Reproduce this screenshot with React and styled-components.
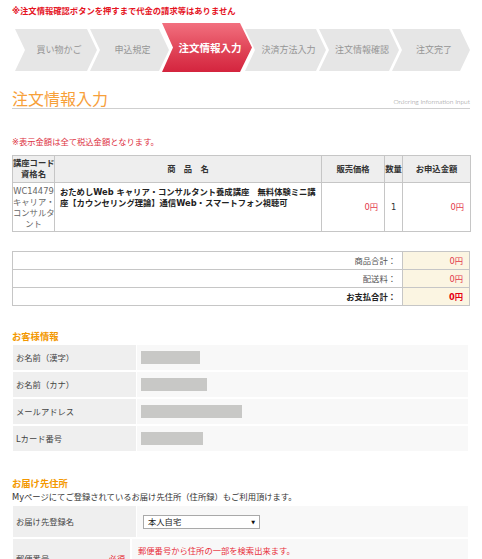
import React from "react";
import styled, { createGlobalStyle } from "styled-components";

const GlobalStyle = createGlobalStyle`
  html, body {
    margin: 0;
    padding: 0;
    background: #fff;
  }
  body {
    font-family: "DejaVu Sans", "Noto Sans CJK JP", sans-serif;
    font-size: 8.3px;
    line-height: 12px;
    color: #333;
  }
`;

const steps = [
  { label: "買い物かご", w: 82 },
  { label: "申込規定", w: 79 },
  { label: "注文情報入力", w: 90, active: true },
  { label: "決済方法入力", w: 81 },
  { label: "注文情報確認", w: 80 },
  { label: "注文完了", w: 78 },
];

const customer = [
  { label: "お名前（漢字）", bar: 59 },
  { label: "お名前（カナ）", bar: 66 },
  { label: "メールアドレス", bar: 101 },
  { label: "Lカード番号", bar: 62 },
];

const codeLines = ["WC14479", "キャリア・", "コンサルタ", "ント"];
const nameLines = [
  "おためしWeb キャリア・コンサルタント養成講座　無料体験ミニ講",
  "座【カウンセリング理論】通信Web・スマートフォン視聴可",
];

const App = () => {
  return (
    <Page>
      <GlobalStyle />
      <Notice>※注文情報確認ボタンを押すまで代金の請求等はありません</Notice>

      <Steps>
        {steps.map((s, i) => (
          <Step key={s.label} $w={s.w} $first={i === 0} $active={s.active}>
            {s.label}
          </Step>
        ))}
      </Steps>

      <TitleRow>
        <Title>注文情報入力</Title>
        <SubTitle>Ordering Information Input</SubTitle>
      </TitleRow>

      <TaxNote>※表示金額は全て税込金額となります。</TaxNote>

      <ItemTable>
        <colgroup>
          <col style={{ width: 42 }} />
          <col style={{ width: 267 }} />
          <col style={{ width: 63 }} />
          <col style={{ width: 18 }} />
          <col style={{ width: 68 }} />
        </colgroup>
        <thead>
          <tr>
            <Th>
              <Line>講座コード</Line>
              <Line>資格名</Line>
            </Th>
            <Th>商　品　名</Th>
            <Th>販売価格</Th>
            <Th>数量</Th>
            <Th>お申込金額</Th>
          </tr>
        </thead>
        <tbody>
          <BodyRow>
            <CodeCell>
              {codeLines.map((l) => (
                <Line key={l}>{l}</Line>
              ))}
            </CodeCell>
            <NameCell>
              {nameLines.map((l) => (
                <Line key={l}>{l}</Line>
              ))}
            </NameCell>
            <Td $align="right">
              <Price>0円</Price>
            </Td>
            <Td $align="center">1</Td>
            <Td $align="right">
              <Price>0円</Price>
            </Td>
          </BodyRow>
        </tbody>
      </ItemTable>

      <TotalTable>
        <tbody>
          <tr>
            <TotalLabel>商品合計：</TotalLabel>
            <TotalValue>0円</TotalValue>
          </tr>
          <tr>
            <TotalLabel>配送料：</TotalLabel>
            <TotalValue>0円</TotalValue>
          </tr>
          <tr>
            <TotalLabel $strong>お支払合計：</TotalLabel>
            <TotalValue $strong>0円</TotalValue>
          </tr>
        </tbody>
      </TotalTable>

      <SectionTitle $top={24}>お客様情報</SectionTitle>
      <FormGrid $label={123} $row={25} $colGap={1}>
        {customer.map((c) => (
          <React.Fragment key={c.label}>
            <Label>{c.label}</Label>
            <Value>
              <Masked $w={c.bar} />
            </Value>
          </React.Fragment>
        ))}
      </FormGrid>

      <SectionTitle $top={26}>お届け先住所</SectionTitle>
      <Lead>Myページにてご登録されているお届け先住所（住所録）もご利用頂けます。</Lead>
      <FormGrid $label={123} $row={31} $colGap={1}>
        <Label>お届け先登録名</Label>
        <Value>
          <SelectBox>
            <span>本人自宅</span>
            <Caret>▼</Caret>
          </SelectBox>
        </Value>
      </FormGrid>

      <FormGrid $label={117} $row={40} $colGap={2} $top={2}>
        <Label>
          郵便番号
          <Required>必須</Required>
        </Label>
        <Value $top>
          <Hint>郵便番号から住所の一部を検索出来ます。</Hint>
          <ZipInput />
        </Value>
      </FormGrid>
    </Page>
  );
};

export default App;

const Page = styled.div`
  width: 482px;
  box-sizing: border-box;
  padding: 0 12px 40px;
`;

const Notice = styled.p`
  margin: 5px 0 0;
  color: #e5141f;
  font-weight: bold;
`;

const Steps = styled.ul`
  list-style: none;
  display: flex;
  align-items: flex-end;
  height: 49px;
  margin: 6px 0 0 3px;
  padding: 0;
`;

const Step = styled.li`
  position: relative;
  z-index: ${(p) => (p.$active ? 1 : 0)};
  flex: 0 0 ${(p) => p.$w}px;
  box-sizing: border-box;
  height: ${(p) => (p.$active ? 49 : 42)}px;
  margin-left: ${(p) => (p.$first ? 0 : -7)}px;
  margin-bottom: ${(p) => (p.$active ? 0 : 1)}px;
  padding-left: 6px;
  display: flex;
  align-items: center;
  justify-content: center;
  clip-path: ${(p) =>
    p.$active
      ? "polygon(0 0, calc(100% - 12px) 0, 100% 50%, calc(100% - 12px) 100%, 0 100%, 11px 50%)"
      : "polygon(0 0, calc(100% - 10px) 0, 100% 50%, calc(100% - 10px) 100%, 0 100%, 10px 50%)"};
  background: ${(p) =>
    p.$active ? "linear-gradient(#f2707f, #e04457 55%, #d4243e)" : "#e6e6e6"};
  color: ${(p) => (p.$active ? "#fff" : "#959595")};
  font-family: "Noto Sans CJK JP", sans-serif;
  font-size: ${(p) => (p.$active ? "10.5px" : "9px")};
  font-weight: ${(p) => (p.$active ? "bold" : "normal")};
  white-space: nowrap;
`;

const TitleRow = styled.div`
  display: flex;
  justify-content: space-between;
  align-items: flex-end;
  margin-top: 16px;
  border-bottom: 1px solid #cfcfcf;
`;

const Title = styled.h1`
  margin: 0;
  font-family: "Noto Sans CJK JP", sans-serif;
  font-size: 16px;
  line-height: 20px;
  font-weight: normal;
  color: #f7a03a;
`;

const SubTitle = styled.span`
  padding-bottom: 3px;
  font-family: "Lato", "DejaVu Sans", sans-serif;
  font-weight: 300;
  font-size: 6.6px;
  line-height: 8px;
  color: #888;
`;

const TaxNote = styled.p`
  margin: 27px 0 0;
  color: #dd2f3e;
`;

const ItemTable = styled.table`
  width: 100%;
  margin-top: 7px;
  border-collapse: collapse;
  table-layout: fixed;
`;

const Line = styled.span`
  display: block;
  height: 11px;
  line-height: 11px;
  white-space: nowrap;
`;

const Th = styled.th`
  height: 26px;
  padding: 0;
  border: 1px solid #c6c6c6;
  background: #eeeeee;
  font-weight: bold;
  line-height: 11px;
  color: #333;
  text-align: center;
  white-space: nowrap;
`;

const BodyRow = styled.tr`
  height: 49px;
`;

const Td = styled.td`
  padding: 0 6px;
  border: 1px solid #c6c6c6;
  text-align: ${(p) => p.$align || "left"};
  vertical-align: middle;
  color: #333;
`;

const CodeCell = styled(Td)`
  padding: 3px 0 0;
  text-align: center;
  vertical-align: top;
  color: #666;
`;

const NameCell = styled(Td)`
  padding: 4px 5px 0 5px;
  vertical-align: top;
  font-weight: bold;
  color: #222;
`;

const Price = styled.span`
  color: #e3384a;
`;

const TotalTable = styled.table`
  width: 100%;
  margin-top: 19px;
  border-collapse: collapse;
  table-layout: fixed;
`;

const TotalLabel = styled.td`
  height: 17px;
  padding: 0 6px 0 0;
  border: 1px solid #c6c6c6;
  text-align: right;
  color: ${(p) => (p.$strong ? "#222" : "#555")};
  font-weight: ${(p) => (p.$strong ? "bold" : "normal")};
`;

const TotalValue = styled.td`
  width: 60px;
  padding: 0 6px 0 0;
  border: 1px solid #c6c6c6;
  background: #fbf5e2;
  text-align: right;
  color: ${(p) => (p.$strong ? "#e60012" : "#e3384a")};
  font-weight: ${(p) => (p.$strong ? "bold" : "normal")};
`;

const SectionTitle = styled.h2`
  margin: ${(p) => p.$top}px 0 3px;
  font-family: "Noto Sans CJK JP", sans-serif;
  font-size: 9.3px;
  line-height: 12px;
  font-weight: bold;
  color: #f39800;
`;

const Lead = styled.p`
  margin: -1px 0 3px;
  color: #333;
`;

const FormGrid = styled.div`
  display: grid;
  grid-template-columns: ${(p) => p.$label}px 1fr;
  grid-auto-rows: ${(p) => p.$row}px;
  gap: 2px ${(p) => p.$colGap}px;
  margin: ${(p) => p.$top || 0}px 2px 0 1px;
`;

const Label = styled.div`
  display: flex;
  align-items: center;
  justify-content: space-between;
  padding: 0 5px 0 3px;
  background: #efefef;
  color: #444;
`;

const Required = styled.span`
  color: #e5141f;
`;

const Value = styled.div`
  display: flex;
  flex-direction: ${(p) => (p.$top ? "column" : "row")};
  align-items: ${(p) => (p.$top ? "flex-start" : "center")};
  padding: ${(p) => (p.$top ? "6px 6px 0" : "0 4px")};
  background: #f8f8f8;
`;

const Masked = styled.span`
  display: block;
  width: ${(p) => p.$w}px;
  height: 13px;
  background: #c8c8c6;
`;

const SelectBox = styled.div`
  display: flex;
  align-items: center;
  justify-content: space-between;
  box-sizing: border-box;
  width: 117px;
  height: 14px;
  margin-left: 2px;
  padding: 0 4px;
  border: 1px solid #a9a9a9;
  background: #fff;
  color: #222;
  line-height: 12px;
`;

const Caret = styled.span`
  font-size: 5px;
  color: #111;
`;

const Hint = styled.span`
  color: #e8303c;
`;

const ZipInput = styled.input`
  width: 60px;
  height: 12px;
  margin-top: 4px;
  border: 1px solid #a9a9a9;
`;
